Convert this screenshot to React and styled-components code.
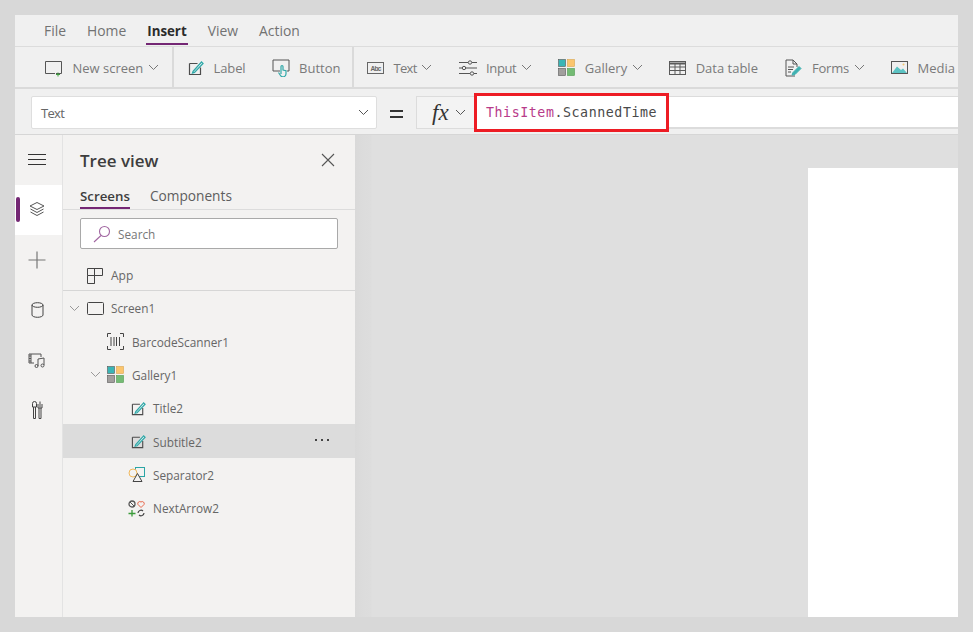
import React from "react";
import styled, { createGlobalStyle } from "styled-components";

const Global = createGlobalStyle`
  html, body { margin: 0; padding: 0; background: #d8d8d8; }
  body { font-family: "Open Sans", "Noto Sans", sans-serif; }
  * { box-sizing: border-box; }
`;

const Page = styled.div`
  width: 973px;
  height: 632px;
  padding: 15px;
  overflow: hidden;
`;
const Window = styled.div`
  width: 943px;
  height: 602px;
  display: flex;
  flex-direction: column;
  overflow: hidden;
  background: #f0f0f0;
`;
const MenuBar = styled.nav`
  height: 32px;
  flex: none;
  display: flex;
  gap: 21px;
  padding-left: 29px;
  border-bottom: 1px solid #dcdcdc;
`;
const MenuItem = styled.div`
  height: 31px;
  position: relative;
  line-height: 32px;
  font-size: ${p => (p.$active ? "13.3px" : "13.9px")};
  color: ${p => (p.$active ? "#2b2b2b" : "#727272")};
  font-weight: ${p => (p.$active ? 700 : 400)};
  ${p => p.$active && `&::after{content:"";position:absolute;left:-1px;right:-1px;bottom:1px;height:2px;background:#742774;}`}
`;
const Ribbon = styled.div`
  height: 42px;
  flex: none;
  display: flex;
  align-items: stretch;
  white-space: nowrap;
  border-bottom: 2px solid #dadada;
`;
const RibbonGroup = styled.div`
  display: flex;
  align-items: center;
  flex: ${p => (p.$w ? "none" : "1")};
  width: ${p => (p.$w ? `${p.$w}px` : "auto")};
  min-width: 0;
  padding-left: ${p => p.$pad}px;
  gap: ${p => p.$gap || 0}px;
  border-right: ${p => (p.$sep ? "2px solid #dadada" : "none")};
`;
const RibbonItem = styled.div`
  display: flex;
  align-items: center;
  gap: 9.5px;
  flex: none;
  font-size: 13px;
  letter-spacing: ${p => p.$track || 0}px;
  color: #7a7a7a;
  margin-top: 1px;
`;
const ChevronWrap = styled.span`
  display: inline-flex;
  margin-left: -5px;
`;
const FormulaBar = styled.div`
  height: 46px;
  flex: none;
  display: flex;
  align-items: center;
  padding: 1px 0 0 16px;
  border-bottom: 1px solid #d6d6d6;
`;
const PropSelect = styled.div`
  width: 346px;
  height: 33px;
  flex: none;
  background: #fff;
  border: 1px solid #dedede;
  border-radius: 2px;
  display: flex;
  align-items: center;
  justify-content: space-between;
  padding: 1px 7px 0 9px;
  font-size: 13px;
  letter-spacing: -0.7px;
  color: #666;
`;
const Equals = styled.div`
  width: 39px;
  flex: none;
  display: flex;
  justify-content: center;
  padding-top: 3px;
`;
const FxBox = styled.div`
  width: 58px;
  height: 33px;
  flex: none;
  border: 1px solid #dcdcdc;
  border-right: none;
  background: #f3f3f3;
  display: flex;
  align-items: center;
  padding-left: 15px;
  gap: 6px;
`;
const Fx = styled.span`
  font-family: "Liberation Serif", serif;
  font-style: italic;
  font-size: 23px;
  color: #333;
  line-height: 1;
`;
const FormulaInput = styled.div`
  flex: 1;
  height: 33px;
  background: #fff;
  border-top: 1px solid #dcdcdc;
  border-bottom: 2px solid #dcdcdc;
`;
const Highlight = styled.div`
  width: 195px;
  height: 39px;
  flex: none;
  border: 3px solid #ed1c24;
  background: #fff;
  display: flex;
  align-items: center;
  padding-left: 9px;
  font-family: "DejaVu Sans Mono", monospace;
  font-size: 13.3px;
  letter-spacing: 0.55px;
  color: #4a4a4a;
  white-space: nowrap;
`;
const Keyword = styled.span`
  color: #b83b8a;
`;
const Body = styled.div`
  flex: 1;
  display: flex;
  min-height: 0;
`;
const Rail = styled.aside`
  width: 48px;
  flex: none;
  background: #f3f2f1;
  border-right: 1px solid #e3e3e3;
  display: flex;
  flex-direction: column;
`;
const RailItem = styled.div`
  height: 50px;
  position: relative;
  display: flex;
  align-items: center;
  justify-content: center;
  padding-right: 3px;
  background: ${p => (p.$active ? "#fff" : "transparent")};
  ${p => p.$active && `&::before{content:"";position:absolute;left:1px;top:12px;width:4px;height:25px;border-radius:2px;background:#742774;}`}
`;
const Panel = styled.section`
  width: 292px;
  flex: none;
  background: #f3f2f1;
  display: flex;
  flex-direction: column;
`;
const PanelHeader = styled.div`
  height: 50px;
  flex: none;
  display: flex;
  align-items: center;
  justify-content: space-between;
  padding: 0 20px 0 17px;
  font-size: 17px;
  font-weight: 600;
  color: #3d3d3d;
`;
const Tabs = styled.div`
  height: 25px;
  flex: none;
  display: flex;
  gap: 20px;
  padding-left: 17px;
  border-bottom: 1px solid #dcdcdc;
`;
const Tab = styled.div`
  height: 24px;
  line-height: 22px;
  font-size: ${p => (p.$active ? "13.3px" : "13.7px")};
  color: ${p => (p.$active ? "#3d3d3d" : "#5e5e5e")};
  font-weight: ${p => (p.$active ? 600 : 400)};
  position: relative;
  ${p => p.$active && `&::after{content:"";position:absolute;left:0;right:0;bottom:0;height:2px;background:#742774;}`}
`;
const SearchBox = styled.div`
  width: 258px;
  height: 31px;
  flex: none;
  margin: 8px 0 0 17px;
  background: #fff;
  border: 1px solid #a9a9a9;
  border-radius: 2px;
  display: flex;
  align-items: center;
  gap: 7px;
  padding-left: 12px;
  font-size: 11.8px;
  color: #777;
`;
const AppRow = styled.div`
  height: 42px;
  flex: none;
  display: flex;
  align-items: center;
  gap: 8px;
  padding: 12px 0 0 24px;
  border-bottom: 1px solid #d6d6d6;
  font-size: 12px;
  color: #666;
`;
const Row = styled.div`
  height: 33.35px;
  flex: none;
  display: flex;
  align-items: center;
  position: relative;
  padding: 1px 0 0 ${p => p.$indent}px;
  gap: ${p => p.$gap || 8}px;
  font-size: 11.8px;
  color: #666;
  background: ${p => (p.$selected ? "#dcdcdc" : "transparent")};
`;
const Caret = styled.span`
  display: inline-flex;
  margin-right: ${p => p.$mr || 0}px;
`;
const More = styled.span`
  position: absolute;
  right: 26px;
  top: 15px;
  display: flex;
  gap: 4px;
`;
const Dot = styled.i`
  width: 2px;
  height: 2px;
  background: #444;
  display: block;
`;
const Canvas = styled.main`
  flex: 1;
  background: linear-gradient(to right, #d9d9d9 0, #dcdcdc 8px, #dddddd 16px, #dfdfdf 17px);
  display: flex;
  justify-content: flex-end;
  padding-top: 33px;
`;
const Artboard = styled.div`
  width: 150px;
  background: #fff;
`;

const Chevron = ({ c = "#777", w = 11 }) => (
  <svg width={w} height="7" viewBox="0 0 11 7" fill="none" stroke={c} strokeWidth="1">
    <path d="M1 1l4.5 4.5L10 1" />
  </svg>
);
const Pencil = ({ size = 18 }) => (
  <svg width={size} height={size} viewBox="0 0 16 16" fill="none">
    <path d="M1.5 3.5h8M1.5 3.5v11h11v-7" stroke="#4c4c4c" strokeWidth="1.2" />
    <path d="M5 11.5L13.5 2l1.5 1.5L6.5 12.5l-2 .5z" stroke="#30a8a8" strokeWidth="1.3" fill="#fff" />
  </svg>
);
const GalleryIcon = () => (
  <svg width="17" height="17" viewBox="0 0 17 17">
    <rect x=".5" y=".5" width="7" height="7" fill="#3ab5b5" stroke="#555" strokeWidth=".6" />
    <rect x="9.5" y=".5" width="7" height="7" fill="#fbc56d" stroke="#d9a64f" strokeWidth=".6" />
    <rect x=".5" y="9.5" width="7" height="7" fill="#a19f9d" stroke="#555" strokeWidth=".6" />
    <rect x="9.5" y="9.5" width="7" height="7" fill="#74bb74" stroke="#4f9a4f" strokeWidth=".6" />
  </svg>
);
const S = ({ children, w = 18, h = 18, vb = "0 0 18 18" }) => (
  <svg width={w} height={h} viewBox={vb} fill="none" stroke="#555" strokeWidth="1">{children}</svg>
);

export default function App() {
  return (
    <Page>
      <Global />
      <Window>
        <MenuBar>
          <MenuItem>File</MenuItem>
          <MenuItem>Home</MenuItem>
          <MenuItem $active>Insert</MenuItem>
          <MenuItem>View</MenuItem>
          <MenuItem>Action</MenuItem>
        </MenuBar>
        <Ribbon>
          <RibbonGroup $w={159} $pad={30} $sep>
            <RibbonItem>
              <S>
                <path d="M.5 2.500h16v12H11M.5 2.500v12H10" />
                <path d="M13 13.500v4M11 15.500h4" stroke="#3f9b3f" />
              </S>
              New screen <ChevronWrap><Chevron /></ChevronWrap>
            </RibbonItem>
          </RibbonGroup>
          <RibbonGroup $w={180} $pad={14} $gap={26} $sep>
            <RibbonItem $track={-0.1}><Pencil size={16} />Label</RibbonItem>
            <RibbonItem>
              <S>
                <path d="M8 12H1V1h16v11h-2" />
                <path d="M9 15V7.500a1 1 0 0 1 2 0V11l3 .7V15a3 3 0 0 1-5.500 1.500L6.500 13.500" stroke="#30a8a8" strokeWidth="1.2" />
              </S>
              Button
            </RibbonItem>
          </RibbonGroup>
          <RibbonGroup $pad={13} $gap={26.5}>
            <RibbonItem $track={-0.7}>
              <svg width="17" height="12" viewBox="0 0 17 12" fill="none">
                <rect x=".5" y=".5" width="16" height="11" stroke="#666" />
                <path d="M2 .5h13" stroke="#666" />
                <text x="8.500" y="8.500" textAnchor="middle" fontSize="6.500" fontFamily="Liberation Sans" fontWeight="700" fill="#666" stroke="none">Abc</text>
              </svg>
              Text <ChevronWrap><Chevron /></ChevronWrap>
            </RibbonItem>
            <RibbonItem $track={-0.4}>
              <S>
                <path d="M0 3.500h9M13 3.500h5M0 9h3M7 9h11M0 14.500h11M15 14.500h3" />
                <circle cx="11" cy="3.500" r="1.700" /><circle cx="5" cy="9" r="1.700" /><circle cx="13" cy="14.500" r="1.700" />
              </S>
              Input <ChevronWrap><Chevron /></ChevronWrap>
            </RibbonItem>
            <RibbonItem><GalleryIcon />Gallery <ChevronWrap><Chevron /></ChevronWrap></RibbonItem>
            <RibbonItem>
              <svg width="17" height="14" viewBox="0 0 17 14" fill="none" stroke="#5a5a5a">
                <rect x=".5" y=".5" width="16" height="13" />
                <path d="M.5 2.500h16" strokeWidth="2" />
                <path d="M.5 6h16M.5 9.500h16M6 3v10M11 3v10" />
              </svg>
              Data table
            </RibbonItem>
            <RibbonItem $track={-0.2}>
              <S>
                <path d="M11 17H2V1h7l4 4v3M9 1v4h4" />
                <path d="M4 8h6M4 10.500h5M4 13h3" />
                <path d="M8 16l1-2.500L15 7.500l2 2-6 6z" fill="#3fb1b1" stroke="#3fb1b1" />
              </S>
              Forms <ChevronWrap><Chevron /></ChevronWrap>
            </RibbonItem>
            <RibbonItem>
              <svg width="17" height="13" viewBox="0 0 17 13" fill="none">
                <rect x=".5" y=".5" width="16" height="12" stroke="#555" />
                <path d="M1 12l5-6.500 4 3.500 2-1.500 4 4.500z" fill="#5cc3c3" />
                <circle cx="12.500" cy="3.500" r="1" fill="#f2c56f" />
              </svg>
              Media
            </RibbonItem>
          </RibbonGroup>
        </Ribbon>
        <FormulaBar>
          <PropSelect>Text<Chevron c="#555" /></PropSelect>
          <Equals>
            <svg width="13" height="8" viewBox="0 0 13 8"><path d="M0 1h13M0 7h13" stroke="#333" strokeWidth="1.8" /></svg>
          </Equals>
          <FxBox><Fx>fx</Fx><Chevron c="#555" /></FxBox>
          <Highlight><span><Keyword>ThisItem</Keyword>.ScannedTime</span></Highlight>
          <FormulaInput />
        </FormulaBar>
        <Body>
          <Rail>
            <RailItem>
              <svg width="18" height="12" viewBox="0 0 18 12" stroke="#333"><path d="M0 .5h18M0 5.500h18M0 10.500h18" /></svg>
            </RailItem>
            <RailItem $active>
              <S vb="0 0 18 18">
                <path d="M9 1.500L16 5l-7 3.500L2 5z" />
                <path d="M2.500 8L9 11.500 15.500 8M2.500 11L9 14.500 15.500 11" />
              </S>
            </RailItem>
            <RailItem>
              <S><path d="M9 .5v17M.5 9h17" stroke="#777" strokeWidth="1.2" /></S>
            </RailItem>
            <RailItem>
              <svg width="13" height="16" viewBox="0 0 13 16" fill="none" stroke="#444">
                <ellipse cx="6.500" cy="3" rx="5.500" ry="2.300" />
                <path d="M1 3v10c0 1.300 2.500 2.300 5.500 2.300S12 14.300 12 13V3" />
              </svg>
            </RailItem>
            <RailItem>
              <S>
                <path d="M6 12H1V3h12v3" />
                <path d="M3 3v9M1 5h2M1 7.500h2M1 10h2" />
                <path d="M10 15V8l6-1v7" />
                <circle cx="8.500" cy="15" r="1.500" /><circle cx="14.500" cy="14.500" r="1.500" />
              </S>
            </RailItem>
            <RailItem>
              <svg width="11" height="18" viewBox="0 0 11 18" fill="none" stroke="#444">
                <path d="M.5 2.500a2 2 0 0 1 4 0V6H.5zM1.500 6v11.500h2V6M8 .5v6M6 3v4h4V3M7 7v10.500h2V7" />
              </svg>
            </RailItem>
          </Rail>
          <Panel>
            <PanelHeader>
              Tree view
              <svg width="14" height="14" viewBox="0 0 14 14" stroke="#555" strokeWidth="1.1"><path d="M1 1l12 12M13 1L1 13" /></svg>
            </PanelHeader>
            <Tabs>
              <Tab $active>Screens</Tab>
              <Tab>Components</Tab>
            </Tabs>
            <SearchBox>
              <svg width="18" height="18" viewBox="0 0 18 18" fill="none" stroke="#a166a1" strokeWidth="1.1">
                <circle cx="11.500" cy="6.500" r="5" /><path d="M8 10.500L1 17" />
              </svg>
              Search
            </SearchBox>
            <AppRow>
              <svg width="16" height="16" viewBox="0 0 16 16" fill="none" stroke="#444">
                <path d="M.5 .5h15v7H.5zM.5 7.500v8h7v-15M7.500 7.500v8" />
              </svg>
              App
            </AppRow>
            <Row $indent={6} $gap={7}>
              <Caret><Chevron c="#999" /></Caret>
              <svg width="17" height="13" viewBox="0 0 17 13" fill="none" stroke="#444"><rect x=".5" y=".5" width="16" height="12" rx="1" /></svg>
              Screen1
            </Row>
            <Row $indent={44}>
              <svg width="17" height="17" viewBox="0 0 17 17" fill="none" stroke="#444">
                <path d="M4 .5H.5V4M13 .5h3.500V4M4 16.500H.5V13M13 16.500h3.500V13M4 4v9M7 4v9M9.500 4v9M12.500 4v9" />
              </svg>
              BarcodeScanner1
            </Row>
            <Row $indent={27}>
              <Caret $mr={-2}><Chevron c="#999" /></Caret>
              <GalleryIcon />
              Gallery1
            </Row>
            <Row $indent={68} $gap={7}><Pencil size={15} />Title2</Row>
            <Row $indent={68} $gap={7} $selected>
              <Pencil size={15} />Subtitle2
              <More><Dot /><Dot /><Dot /></More>
            </Row>
            <Row $indent={65}>
              <svg width="17" height="15" viewBox="0 0 17 15" fill="none">
                <rect x="7.500" y=".5" width="9" height="9" stroke="#2aa5a5" />
                <circle cx="5" cy="6" r="4" stroke="#f2b95c" fill="#f3f2f1" />
                <path d="M9.500 6.500l4.500 8H5z" stroke="#444" fill="#f3f2f1" />
              </svg>
              Separator2
            </Row>
            <Row $indent={65}>
              <svg width="17" height="17" viewBox="0 0 17 17" fill="none">
                <circle cx="4" cy="4" r="3" stroke="#555" strokeWidth="1.3" /><path d="M2 2l4 4" stroke="#555" />
                <path d="M13 7.500L10 4.500a2 2 0 0 1 3-2.500 2 2 0 0 1 3 2.500z" stroke="#e8664a" />
                <path d="M4 10v6.500M.5 13.500h7" stroke="#3a9b3a" strokeWidth="1.3" />
                <path d="M10 13a3 3 0 0 1 5-2M16 13a3 3 0 0 1-5 2" stroke="#444" strokeWidth="1.2" />
              </svg>
              NextArrow2
            </Row>
          </Panel>
          <Canvas><Artboard /></Canvas>
        </Body>
      </Window>
    </Page>
  );
}
